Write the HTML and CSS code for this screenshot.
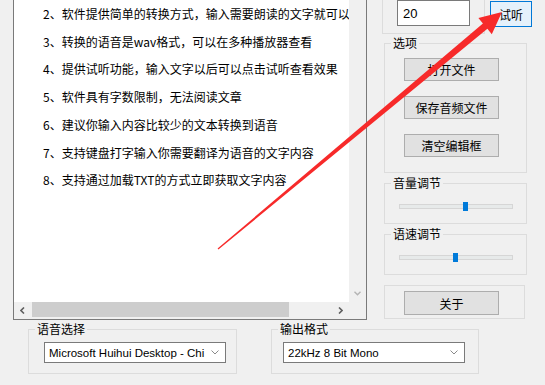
FILE: index.html
```html
<!DOCTYPE html>
<html lang="zh-CN">
<head>
    <meta charset="UTF-8">
    <title>文字转语音</title>
    <link rel="stylesheet" href="styles.css">
</head>
<body>
<div class="window">
    <div class="top">
        <!-- 文本编辑框 -->
        <div class="editor">
            <div class="editor-text">
                <p>2、软件提供简单的转换方式，输入需要朗读的文字就可以转换成语音</p>
                <p>3、转换的语音是wav格式，可以在多种播放器查看</p>
                <p>4、提供试听功能，输入文字以后可以点击试听查看效果</p>
                <p>5、软件具有字数限制，无法阅读文章</p>
                <p>6、建议你输入内容比较少的文本转换到语音</p>
                <p>7、支持键盘打字输入你需要翻译为语音的文字内容</p>
                <p>8、支持通过加载TXT的方式立即获取文字内容</p>
            </div>
            <div class="vscroll">
                <span class="sb-btn">
                    <svg width="7" height="5" viewBox="0 0 7 5"><polyline points="0.5,0.8 3.5,3.8 6.5,0.8" fill="none" stroke="#b4b4b4" stroke-width="1.4"/></svg>
                </span>
            </div>
            <div class="hscroll">
                <span class="sb-btn">
                    <svg width="5" height="7" viewBox="0 0 5 7"><polyline points="4,0.5 1,3.5 4,6.5" fill="none" stroke="#606060" stroke-width="1.6"/></svg>
                </span>
                <div class="hscroll-track"><div class="hscroll-thumb"></div></div>
                <span class="sb-btn">
                    <svg width="5" height="7" viewBox="0 0 5 7"><polyline points="1,0.5 4,3.5 1,6.5" fill="none" stroke="#606060" stroke-width="1.6"/></svg>
                </span>
            </div>
            <div class="corner"></div>
        </div>

        <!-- 右侧面板 -->
        <div class="side">
            <div class="side-top">
                <div class="group-num">
                    <input class="field" type="text" value="20">
                </div>
                <button class="btn btn-listen">试听</button>
            </div>

            <fieldset class="group group-opts">
                <legend>选项</legend>
                <button class="btn btn-wide">打开文件</button>
                <button class="btn btn-wide">保存音频文件</button>
                <button class="btn btn-wide">清空编辑框</button>
            </fieldset>

            <fieldset class="group group-slider">
                <legend>音量调节</legend>
                <div class="track"><span class="thumb" style="left: 63px"></span></div>
            </fieldset>

            <fieldset class="group group-slider">
                <legend>语速调节</legend>
                <div class="track"><span class="thumb" style="left: 53px"></span></div>
            </fieldset>

            <fieldset class="group group-about">
                <button class="btn btn-wide btn-about">关于</button>
            </fieldset>
        </div>
    </div>

    <div class="bottom">
        <fieldset class="group group-voice">
            <legend>语音选择</legend>
            <div class="combo">
                <span>Microsoft Huihui Desktop - Chi</span>
                <svg width="8" height="5" viewBox="0 0 8 5"><polyline points="0.5,0.5 4,4 7.5,0.5" fill="none" stroke="#8a8a8a" stroke-width="1"/></svg>
            </div>
        </fieldset>
        <fieldset class="group group-format">
            <legend>输出格式</legend>
            <div class="combo">
                <span>22kHz 8 Bit Mono</span>
                <svg width="8" height="5" viewBox="0 0 8 5"><polyline points="0.5,0.5 4,4 7.5,0.5" fill="none" stroke="#8a8a8a" stroke-width="1"/></svg>
            </div>
        </fieldset>
    </div>

    <!-- 红色箭头标注 -->
    <svg class="mark" width="545" height="385" viewBox="0 0 545 385">
        <polygon points="217.6,248.5 482.9,23.4 478.4,18.0 502,12 491.8,34.2 487.4,28.8 218.4,249.5" fill="#f72a2a"/>
    </svg>
</div>
</body>
</html>
```

FILE: styles.css
```css
/* 全体 */
body {
    margin: 0;
    background: #f0f0f0;
    font-family: "Liberation Sans", "Noto Sans CJK SC", sans-serif;
    font-size: 12px;
    color: #000;
    overflow: hidden;
}

.window {
    position: relative;
    width: 545px;
    height: 385px;
}

.top {
    display: flex;
    height: 320px;
}

/* 文本编辑框 */
.editor {
    box-sizing: border-box;
    width: 354px;
    height: 320px;
    margin-left: 13px;
    border: 1px solid #7a7a7a;
    border-top: none;
    display: grid;
    grid-template-columns: 1fr 17px;
    grid-template-rows: 1fr 17px;
}

.editor-text {
    background: #fff;
    overflow: hidden;
    white-space: nowrap;
    padding-left: 29px;
    font-family: "Noto Sans CJK SC", sans-serif;
}

.editor-text p {
    margin: 0;
    line-height: 27.7px;
}

.vscroll {
    background: #f0f0f0;
    display: flex;
    flex-direction: column;
    justify-content: flex-end;
}

.sb-btn {
    width: 17px;
    height: 17px;
    display: flex;
    align-items: center;
    justify-content: center;
    flex: none;
}

.hscroll {
    background: #f0f0f0;
    display: flex;
}

.hscroll-track {
    flex: 1;
    display: flex;
    align-items: flex-start;
}

.hscroll-thumb {
    width: 257px;
    height: 15px;
    margin-left: 1px;
    background: #cdcdcd;
}

.corner {
    background: #f0f0f0;
}

/* 右侧面板 */
.side {
    margin-left: 15px;
    width: 150px;
    display: flex;
    flex-direction: column;
    align-items: flex-start;
}

.side-top {
    display: flex;
    align-items: flex-start;
}

.group-num {
    box-sizing: border-box;
    width: 103px;
    height: 34px;
    border: 1px solid #dcdcdc;
    border-top: none;
}

.field {
    box-sizing: border-box;
    display: block;
    width: 73px;
    height: 26px;
    margin-left: 14px;
    padding: 0 5px;
    border: 1px solid #7a7a7a;
    background: #fff;
    font-family: "Liberation Sans", sans-serif;
    font-size: 13px;
    outline: none;
}

.btn {
    box-sizing: border-box;
    padding: 0;
    border: 1px solid #adadad;
    background: #e1e1e1;
    font-family: "Noto Sans CJK SC", sans-serif;
    font-size: 12px;
    color: #000;
}

.btn-listen {
    width: 42px;
    height: 26px;
    margin: 1px 0 0 5px;
    border-color: #0078d7;
    background: #e5f1fb;
}

.btn-wide {
    display: block;
    width: 95px;
    height: 23px;
    margin-left: 19px;
}

.btn-about {
    height: 24px;
}

/* 分组框 */
.group {
    margin: 0;
    padding: 0;
    min-width: 0;
    border: 1px solid #dcdcdc;
}

.group legend {
    margin-left: 6px;
    padding: 0 2px;
    line-height: 16px;
    font-family: "Noto Sans CJK SC", sans-serif;
    font-size: 12px;
}

.group-opts {
    box-sizing: border-box;
    width: 143px;
    margin: 1px 0 0 2px;
    padding: 7px 0 15px 0;
    display: flex;
    flex-direction: column;
    gap: 15px;
}

.group-slider {
    box-sizing: border-box;
    width: 143px;
    margin: 2px 0 0 2px;
    padding: 13px 0 14px 0;
}

.track {
    position: relative;
    box-sizing: border-box;
    width: 114px;
    height: 5px;
    margin-left: 14px;
    border: 1px solid #d6d6d6;
    background: #e7eaea;
}

.thumb {
    position: absolute;
    top: -3px;
    width: 5px;
    height: 9px;
    background: #007ad9;
}

.group-about {
    box-sizing: border-box;
    width: 141px;
    margin: 10px 0 0 2px;
    padding: 5px 0 3px 0;
}

/* 下方选择 */
.bottom {
    display: flex;
    gap: 34px;
    margin-top: 1px;
    padding-left: 28px;
}

.group-voice {
    box-sizing: border-box;
    width: 209px;
    padding: 5px 0 10px 0;
}

.group-voice .combo {
    margin-left: 15px;
}

.group-format {
    box-sizing: border-box;
    width: 208px;
    padding: 5px 0 10px 0;
}

.group-format .combo {
    margin-left: 11px;
}

.combo {
    box-sizing: border-box;
    width: 182px;
    height: 21px;
    display: flex;
    align-items: center;
    justify-content: space-between;
    padding: 0 6px 0 4px;
    border: 1px solid #7a7a7a;
    background: #fff;
    font-size: 11.5px;
    white-space: nowrap;
}

/* 标注箭头 */
.mark {
    position: absolute;
    left: 0;
    top: 0;
    pointer-events: none;
}
```
